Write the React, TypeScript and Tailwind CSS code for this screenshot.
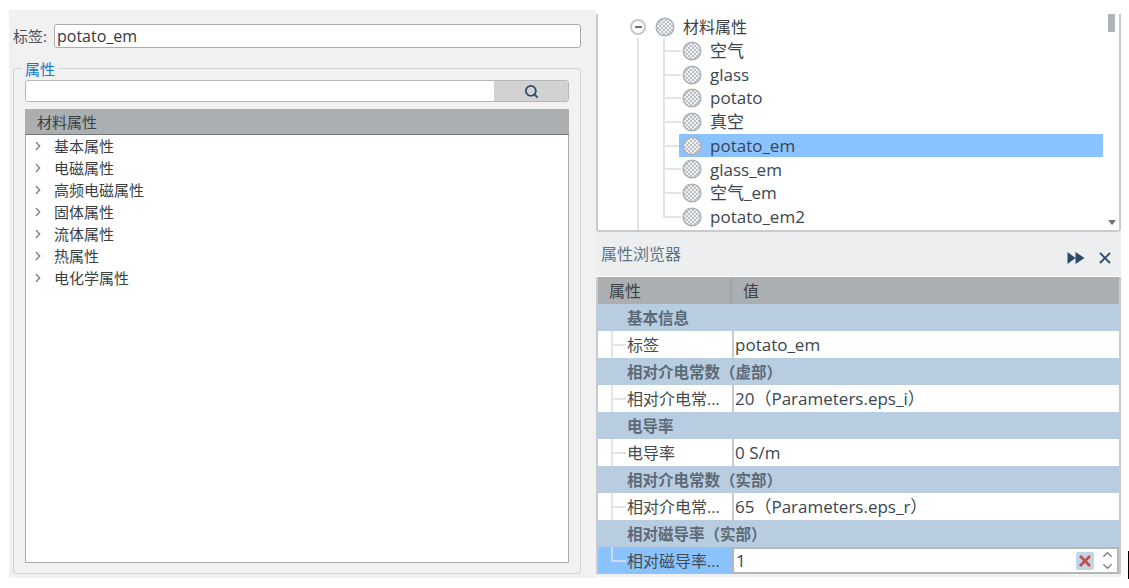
import { ChevronRight, ChevronUp, ChevronDown, Search } from 'lucide-react';

const font = { fontFamily: '"Open Sans", "Noto Sans CJK SC", sans-serif' };

const categories = ['基本属性', '电磁属性', '高频电磁属性', '固体属性', '流体属性', '热属性', '电化学属性'];
const materials = ['空气', 'glass', 'potato', '真空', 'potato_em', 'glass_em', '空气_em', 'potato_em2'];

const props = [
  { group: '基本信息', name: '标签', value: 'potato_em' },
  { group: '相对介电常数（虚部）', name: '相对介电常...', value: '20（Parameters.eps_i）' },
  { group: '电导率', name: '电导率', value: '0 S/m' },
  { group: '相对介电常数（实部）', name: '相对介电常...', value: '65（Parameters.eps_r）' },
];

const MaterialIcon = () => (
  <svg width="20" height="20" viewBox="0 0 20 20" className="relative shrink-0">
    <defs>
      <pattern id="dither" width="4" height="4" patternUnits="userSpaceOnUse">
        <rect width="4" height="4" fill="#eef0f1" />
        <rect width="2" height="2" fill="#bcc1c5" />
        <rect x="2" y="2" width="2" height="2" fill="#bcc1c5" />
      </pattern>
    </defs>
    <circle cx="10" cy="10" r="8.8" fill="url(#dither)" stroke="#aab0b5" strokeWidth="1.5" />
  </svg>
);

const App = () => {
  return (
    <div style={font} className="flex w-[1129px] h-[588px] bg-white overflow-hidden relative text-[#3c4348]">
      {/* LEFT PANEL */}
      <div className="ml-[9px] mt-[10px] w-[587px] h-[568px] bg-[#f1f1f1] shrink-0 pl-[4px]">
        <div className="flex items-center h-[24px] mt-[14px]">
          <span className="text-[15px] w-[41px] text-[#4a5055] whitespace-nowrap">标签:</span>
          <div className="w-[527px] h-[24px] bg-white border border-[#a9adb0] rounded-[3px] pl-[2px] text-[16px] leading-[22px] text-[#333a40]">
            potato_em
          </div>
        </div>

        {/* GROUP BOX */}
        <div className="relative mt-[20px] w-[568px] h-[506px] border border-[#d0d2d3] rounded-[3px] pt-[11px] pl-[11px]">
          <span className="absolute left-[8px] -top-[9px] px-[3px] bg-[#f1f1f1] text-[15px] leading-[18px] text-[#1277c9]">属性</span>
          <div className="flex w-[544px] h-[22px] border border-[#b4b7b9] rounded-[3px] overflow-hidden">
            <div className="w-[468px] bg-white" />
            <div className="flex-1 bg-[#d2d2d2] flex items-center justify-center">
              <Search size={15} strokeWidth={2.8} color="#2d4a66" />
            </div>
          </div>
          <div className="mt-[7px] w-[544px] h-[454px] border border-[#a9adb0] border-t-0 bg-white">
            <div className="h-[26px] -mx-px bg-[#abafb2] border-b border-[#73777a] pl-[12px] text-[15px] leading-[26px] text-[#3c4145]">
              材料属性
            </div>
            {categories.map((c) => (
              <div key={c} className="flex items-center h-[22px] pl-[5px] text-[15px] text-[#3a3f44]">
                <ChevronRight size={14} strokeWidth={2.4} color="#7f8386" className="mr-[9px]" />
                <span>{c}</span>
              </div>
            ))}
          </div>
        </div>
      </div>

      {/* RIGHT PANEL */}
      <div className="w-[525px] shrink-0 flex flex-col pt-[14px]">
        {/* TREE */}
        <div className="relative h-[218px] border-l-2 border-r-2 border-b-2 border-[#c8cacc] rounded-b-[3px] bg-white pt-[2px] overflow-hidden">
          <div className="absolute left-[39px] top-[24px] bottom-0 w-[2px] bg-[#e3e4e5]" />
          <div className="absolute left-[65px] top-[24px] h-[180px] w-[2px] bg-[#e3e4e5]" />
          <div className="flex items-center h-[24px] pl-[32px] -mt-px">
            <span className="flex items-center justify-center w-[16px] h-[16px] rounded-full border-2 border-[#c4c8cb] mr-[9px] bg-white">
              <span className="w-[7px] h-[2px] bg-[#6b7277]" />
            </span>
            <MaterialIcon />
            <span className="ml-[8px] text-[16px] text-[#3a4046]">材料属性</span>
          </div>
          {materials.map((m, i) => (
            <div key={m} className="relative flex items-center h-[23.7px] pl-[84px]">
              <div className="absolute left-[65px] top-[11px] w-[18px] h-[2px] bg-[#e3e4e5]" />
              {i === 4 && <div className="absolute left-[81px] top-0 w-[424px] h-[23px] bg-[#8ac3ff]" />}
              <MaterialIcon />
              <span className="ml-[8px] text-[17px] text-[#3a4650] relative">{m}</span>
            </div>
          ))}
          <div className="absolute right-[4px] top-0 w-[7px] h-[18px] bg-[#b0b4b8]" />
          <div className="absolute right-[3px] bottom-[5px] w-0 h-0 border-l-[4px] border-r-[4px] border-t-[5px] border-l-transparent border-r-transparent border-t-[#6b7378]" />
        </div>

        {/* PROPERTY BROWSER */}
        <div className="h-[44px] bg-[#eceef0] flex items-center pl-[5px] pr-[10px]">
          <span className="text-[16px] text-[#617486] -mt-[1px]">属性浏览器</span>
          <div className="ml-auto flex items-center gap-[14px] mt-[8px]">
            <svg width="18" height="14" viewBox="0 0 18 14">
              <path d="M0.5 1v12l8-6zM8.5 1v12l9-6z" fill="#2f4a68" />
            </svg>
            <svg width="12" height="12" viewBox="0 0 12 12">
              <path d="M1 1l10 10M11 1L1 11" stroke="#2f4a68" strokeWidth="1.8" />
            </svg>
          </div>
        </div>
        <div className="border-l-2 border-r-2 border-[#c8cacc] h-[297px] mt-px">
          <div className="flex h-[27px] bg-[#abafb2] text-[16px] leading-[28px] text-[#3c4145]">
            <div className="w-[134px] pl-[11px] border-r-2 border-[#a0a4a7]">属性</div>
            <div className="pl-[11px]">值</div>
          </div>
          {props.map((p) => (
            <div key={p.group}>
              <div className="h-[27px] bg-[#b9cde0] pl-[29px] text-[15.5px] font-bold leading-[28px] text-[#5b6a78]">{p.group}</div>
              <div className="flex h-[27px] bg-white">
                <div className="relative w-[134px] pl-[29px] text-[16px] leading-[28px] text-[#454b50] shrink-0 whitespace-nowrap">
                  <div className="absolute left-[13px] top-0 bottom-0 w-[2px] bg-[#e3e4e5]" />
                  <div className="absolute left-[13px] top-[13px] w-[15px] h-[2px] bg-[#e3e4e5]" />
                  {p.name}
                </div>
                <div className="flex-1 border-l-2 border-[#c8cacc] pl-[1px] text-[17px] leading-[28px] text-[#3a4650]">{p.value}</div>
              </div>
            </div>
          ))}
          <div className="h-[27px] bg-[#b9cde0] pl-[29px] text-[15.5px] font-bold leading-[28px] text-[#5b6a78]">相对磁导率（实部）</div>
          <div className="flex h-[27px]">
            <div className="relative w-[134px] bg-[#8ac3ff] pl-[29px] text-[16px] leading-[28px] text-[#454b50] shrink-0 whitespace-nowrap">
              <div className="absolute left-[13px] top-0 h-[14px] w-[2px] bg-[#cfdbe6]" />
              <div className="absolute left-[13px] top-[13px] w-[15px] h-[2px] bg-[#cfdbe6]" />
              相对磁导率...
            </div>
            <div className="flex-1 flex items-center bg-white border-2 border-[#b4b7b9] pl-[2px] pr-[2px] text-[17px] text-[#3a4650]">
              1
              <div className="ml-auto flex items-center justify-center w-[18px] h-[18px] bg-[#c3d5e5] rounded-[2px]">
                <svg width="14" height="14" viewBox="0 0 14 14">
                  <path d="M2 2l10 10M12 2L2 12" stroke="#c0504d" strokeWidth="2.8" />
                </svg>
              </div>
              <div className="ml-[5px] flex flex-col items-center w-[16px]">
                <ChevronUp size={15} strokeWidth={2.2} color="#64767f" className="-mb-[3px]" />
                <ChevronDown size={15} strokeWidth={2.2} color="#64767f" />
              </div>
            </div>
          </div>
        </div>
        <div className="h-[3px] bg-[#f1f1f1]" />
      </div>
      <div className="absolute left-[1128px] top-[551px] h-[28px] w-px bg-black" />
    </div>
  );
};

export default App;
